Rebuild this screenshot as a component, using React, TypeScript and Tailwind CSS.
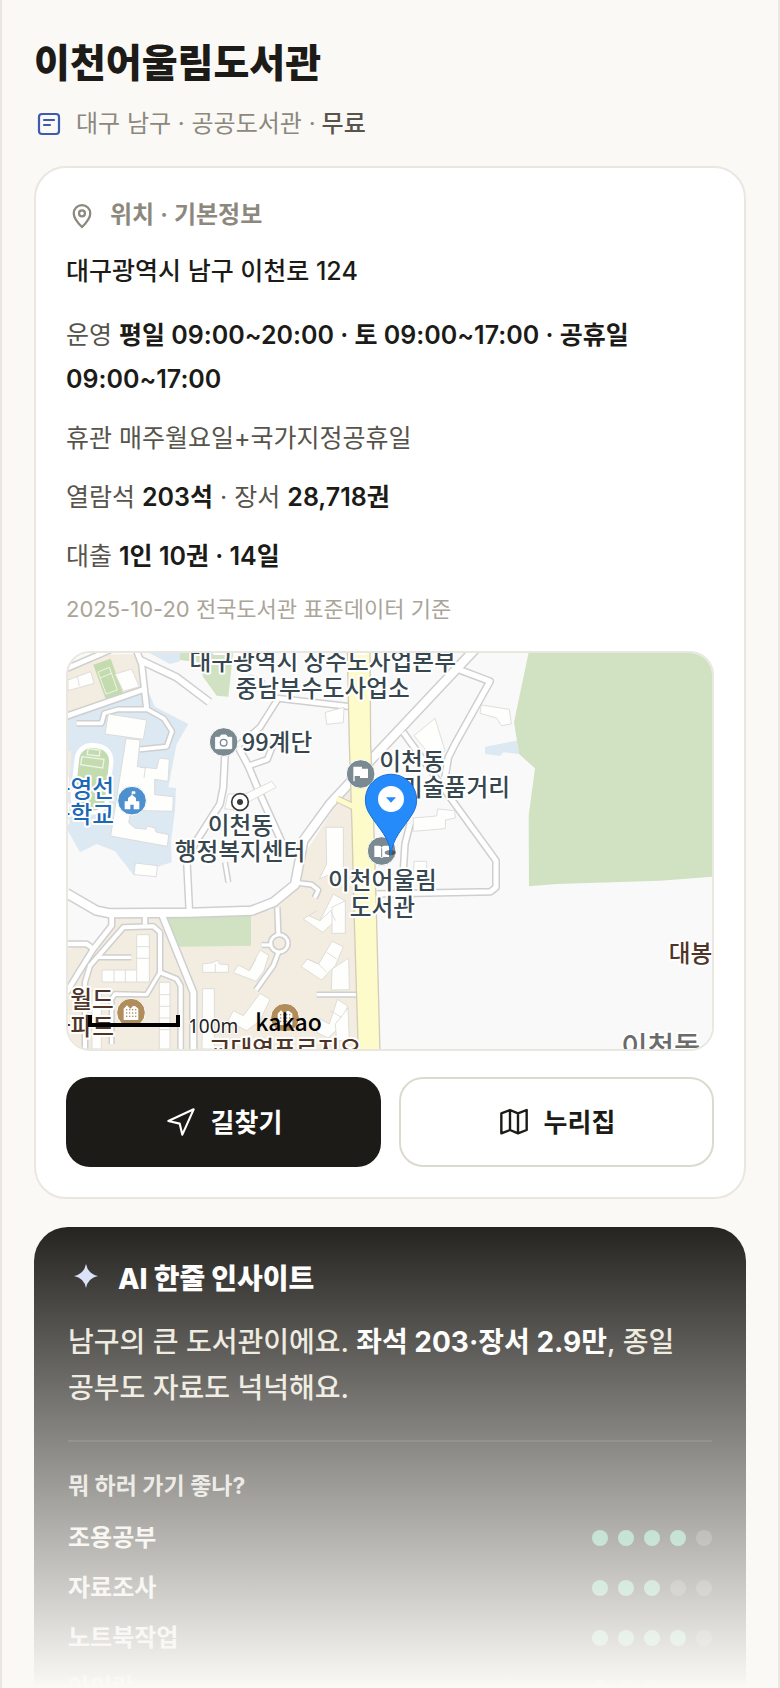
import { Fragment } from "react";

type Pt = string;

const roads: { d: Pt; w: number }[] = [
  { d: "M10 78L150 18", w: 14 },
  { d: "M10 220L255 135", w: 15 },
  { d: "M228 15L245 60L260 195", w: 15 },
  { d: "M240 48L350 100L448 174", w: 18 },
  { d: "M50 238H125L133 208L175 196H262L312 224L336 262L320 308L240 316", w: 11 },
  { d: "M495 330L490 430L480 480L410 590L380 640L388 800", w: 16 },
  { d: "M535 310L565 366L600 450L668 600", w: 16 },
  { d: "M565 366L622 346L640 300", w: 14 },
  { d: "M540 300L600 250L655 163L865 187", w: 14 },
  { d: "M1260 0L1020 255L940 340L810 480L730 590L705 722L640 775L575 800L390 806L150 808L110 800L20 748", w: 24 },
  { d: "M1200 78L1290 112L1185 300L1165 340L1155 400", w: 16 },
  { d: "M1030 265L1170 460L1290 625L1308 650V730L1292 743L950 750", w: 15 },
  { d: "M1050 540L1035 600L1030 680", w: 15 },
  { d: "M155 815V845L100 915L50 995L20 1045", w: 14 },
  { d: "M20 900H80L100 915", w: 13 },
  { d: "M255 810V842", w: 13 },
  { d: "M110 940H214", w: 10 },
  { d: "M75 1225V1015L90 965L190 850L280 847L300 865V985L350 1005L362 1025V1225", w: 12 },
  { d: "M300 985L260 1052L165 1050L155 1065V1200", w: 10 },
  { d: "M305 810L400 1045V1225", w: 17 },
  { d: "M652 790L655 870", w: 12 },
  { d: "M605 903L632 903", w: 10 },
  { d: "M655 925L640 965L588 1038", w: 11 },
  { d: "M770 1052H892", w: 10 },
  { d: "M705 716L755 722L775 738L764 762", w: 11 },
  { d: "M495 655L505 715", w: 10 },
];

const buildings: Pt[] = [
  "M24 108L92 83L102 118L24 140Z",
  "M165 90L215 75L238 128L190 142Z",
  "M145 210L260 228L250 286L135 270Z",
  "M198 284L240 288L232 368L290 374L298 342L328 346L324 412L284 406L284 452L340 458L338 502L262 500L212 498L206 536L224 552L258 556L262 546L284 552L288 564L326 572L322 607L152 576Z",
  "M635 412L648 430L520 498L494 494L504 450L560 448Z",
  "M548 110L572 92L615 110L600 134Z",
  "M796 205L852 190L850 236L800 241Z",
  "M1062 275L1125 223L1155 320L1120 345Z",
  "M1264 183L1348 196L1354 240L1324 245L1310 222L1260 208Z",
  "M1060 522L1130 516L1133 495L1184 500L1186 522L1156 528L1156 554L1060 562Z",
  "M226 657L292 665L289 698L222 692Z",
  "M230 872H268V1014H126V978H230Z",
  "M298 1015H330V1215H298Z",
  "M428 960L458 956L474 948L478 960L505 962V985H428Z",
  "M428 1034H463V1215H426Z",
  "M535 963L568 980L600 918L626 934L612 980L588 1012L520 986Z",
  "M520 1100L550 1115L600 1048L630 1066L600 1130L560 1160L504 1130Z",
  "M746 815L780 830L820 750L854 770L826 830L788 865L730 825Z",
  "M816 790L856 770V868H816Z",
  "M742 945L776 960L816 892L850 908L826 965L784 1008L724 968Z",
  "M816 975L866 942L868 1037L814 1038Z",
  "M780 1125L808 1140L832 1066L863 1086L838 1150L804 1182L770 1165Z",
  "M826 1140L864 1092L868 1190H830Z",
  "M798 550H850V690H812L778 705L800 660Z",
  "M1062 652H1100V710H1060Z",
  "M96 1040H124V1215H96Z",
];

function MapLabel({ x, y, size = 71, anchor = "middle", fill = "#37474f", children }: {
  x: number; y: number; size?: number; anchor?: "start" | "middle" | "end"; fill?: string; children: string;
}) {
  return (
    <text x={x} y={y} fontSize={size} textAnchor={anchor} fill={fill} stroke="#fff" strokeWidth={12} strokeLinejoin="round" paintOrder="stroke" fontWeight={500}>
      {children}
    </text>
  );
}

function Apartment({ x, y }: { x: number; y: number }) {
  return (
    <g transform={`translate(${x} ${y})`}>
      <circle r={43} fill="#b08d5b" stroke="#fff" strokeWidth={3} />
      <path d="M-22 22V-12L-12 -22L-2 -12L6 -20H12L22 -12V22Z" fill="#fff" />
      {[-9, 1, 11].map((cy) =>
        [-13, -4, 5, 14].map((cx) => <rect key={`${cx}${cy}`} x={cx - 2} y={cy - 2} width={4} height={4} fill="#b08d5b" />),
      )}
    </g>
  );
}

function LocationMap() {
  return (
    <svg viewBox="24 27 1932 1188" preserveAspectRatio="xMidYMid slice" className="block h-[396px] w-full" role="img" aria-label="이천어울림도서관 지도">
      <rect x={0} y={0} width={2000} height={1300} fill="#f9f9f9" />
      <path d="M24 210L260 130L285 188L385 240L350 300L325 430L348 432L345 500L333 590L335 655L220 692L165 622L110 600L60 625L24 560ZM255 20H360V52L330 60Z" fill="#dce9f2" />
      <path d="M24 75L130 32L235 30L248 132L24 212ZM24 320L34 322L30 390L24 400Z" fill="#f3ece0" />
      <path d="M155 805L630 800L700 740L740 620L830 480L872 430L880 600L895 1220H20V915L100 905L155 835Z" fill="#f3ece0" />
      <path d="M360 20H520L505 158L470 155L430 100L415 55L360 48Z" fill="#d0e2c1" />
      <path d="M318 815L573 813V905L358 908Z" fill="#d0e2c1" />
      <path d="M1275 308L1370 290L1377 330L1330 325L1320 336L1275 330Z" fill="#dce9f2" />
      <path d="M1407 20L1362 235L1377 330L1425 373L1406 515L1407 727L1490 720L1800 710L1970 697V20Z" fill="#d0e2c1" />
      <path d="M100 62L152 44L190 150L138 168Z" fill="#c3dbae" />
      <path d="M114 84L148 70L172 138L138 150ZM120 102L154 88" fill="none" stroke="#eef5e8" strokeWidth={3} />
      <rect x={38} y={297} width={117} height={215} rx={52} fill="#fff" transform="rotate(6 96 400)" />
      <rect x={52} y={312} width={90} height={188} rx={38} fill="#c3dbae" transform="rotate(6 96 400)" />
      <path d="M84 314L120 318L118 336L82 332ZM66 338L132 346L128 372L62 362Z" fill="none" stroke="#eef5e8" strokeWidth={4} />

      <g fill="none" stroke="#cfcfcf" strokeLinejoin="round">
        {roads.map((r) => <path key={r.d} d={r.d} strokeWidth={r.w + 9} />)}
        <circle cx={658} cy={898} r={26} strokeWidth={18} />
      </g>
      <g fill="none" stroke="#fff" strokeLinejoin="round">
        {roads.map((r) => <path key={r.d} d={r.d} strokeWidth={r.w} />)}
        <circle cx={658} cy={898} r={26} strokeWidth={9} />
      </g>
      <g fill="#fefefd" stroke="#d9d8d5" strokeWidth={2.5}>
        {buildings.map((d) => <path key={d} d={d} />)}
        <path d="M52 96L58 126M240 370L256 372L252 402M230 908H268M230 943H268M230 978V1014M196 978V1014M162 978V1014M298 1052H330M298 1087H330M298 1122H330M298 1157H330M466 960V984M568 980L588 945M746 815L770 800M780 830L812 800L826 830M742 945L776 960L800 985M800 925L830 945M810 1100L845 1120" fill="none" />
      </g>
      <path d="M832 465L880 488" stroke="#d6d0bc" strokeWidth={22} />
      <path d="M862 20L868 300L876 550L882 800L895 1225H960L949 800L940 500L932 300L930 20Z" fill="#fefbca" stroke="#d3cdb9" strokeWidth={4} />
      <path d="M830 464L884 490" stroke="#fefbca" strokeWidth={15} />

      <g style={{ fontFamily: '"Noto Sans CJK KR", sans-serif' }}>
        <MapLabel x={788} y={78}>대구광역시 상수도사업본부</MapLabel>
        <MapLabel x={788} y={158}>중남부수도사업소</MapLabel>
        <MapLabel x={545} y={320} anchor="start">99계단</MapLabel>
        <MapLabel x={541} y={570}>이천동</MapLabel>
        <MapLabel x={540} y={649}>행정복지센터</MapLabel>
        <MapLabel x={162} y={460} anchor="end" fill="#1c68b5">대구영선</MapLabel>
        <MapLabel x={162} y={537} anchor="end" fill="#1c68b5">초등학교</MapLabel>
        <MapLabel x={958} y={377} anchor="start">이천동</MapLabel>
        <MapLabel x={958} y={457} anchor="start">고미술품거리</MapLabel>
        <MapLabel x={1826} y={953} anchor="start" fill="#4f3528">대봉</MapLabel>
        <MapLabel x={1684} y={1238} size={86} anchor="start" fill="#6b6b6b">이천동</MapLabel>
        <Apartment x={213} y={1106} />
        <MapLabel x={96} y={1093} fill="#4f3528">월드</MapLabel>
        <MapLabel x={162} y={1172} anchor="end" fill="#4f3528">아파트</MapLabel>
        <Apartment x={675} y={1121} />
        <MapLabel x={675} y={1241} fill="#4f3528">교대역푸르지오</MapLabel>
      </g>

      <g transform="translate(491 294)">
        <circle r={43} fill="#7b8a91" stroke="#fff" strokeWidth={3} />
        <path d="M-24 -14H-12L-7 -21H7L12 -14H24V20H-24Z" fill="#fff" stroke="#fff" strokeWidth={3} strokeLinejoin="round" />
        <circle cy={2} r={10} fill="#fff" stroke="#7b8a91" strokeWidth={4} />
      </g>
      <g transform="translate(902 390)">
        <circle r={43} fill="#7b8a91" stroke="#fff" strokeWidth={3} />
        <path d="M-20 -22V22M-20 -20H2V-14H20V10H0V4H-20Z" fill="#fff" stroke="#fff" strokeWidth={4} />
      </g>
      <g transform="translate(965 621)">
        <circle r={43} fill="#7b8a91" stroke="#fff" strokeWidth={3} />
        <path d="M-22 -16H-8Q0 -16 0 -8Q0 -16 8 -16H22V18H6L0 21L-6 18H-22Z" fill="#fff" />
        <path d="M0 -8V18" stroke="#7b8a91" strokeWidth={3} />
      </g>
      <g transform="translate(216 470)">
        <circle r={43} fill="#4e90cd" stroke="#fff" strokeWidth={3} />
        <path d="M-22 26V2H-12V-8L0 -18L12 -8V2H22V26H5V12H-5V26Z" fill="#fff" />
        <path d="M0 -16V-27H9V-21H0" fill="#fff" stroke="#fff" strokeWidth={2} />
      </g>
      <circle cx={540} cy={474} r={25} fill="#fff" stroke="#37393b" strokeWidth={5} />
      <circle cx={540} cy={474} r={9} fill="#37393b" />

      <g style={{ fontFamily: '"Noto Sans CJK KR", sans-serif' }}>
        <MapLabel x={967} y={736}>이천어울림</MapLabel>
        <MapLabel x={967} y={816}>도서관</MapLabel>
      </g>
      <ellipse cx={991} cy={626} rx={17} ry={8} fill="#1f2937" opacity={0.55} />
      <path d="M993 632C988 580 958 556 930 512A77 77 0 1 1 1056 512C1028 556 998 580 993 632Z" fill="#258bfb" stroke="#1c6fd4" strokeWidth={3} />
      <circle cx={993} cy={465} r={39} fill="#fff" />
      <path d="M978 460H1008L993 476Z" fill="#258bfb" />

      <path d="M84 1113H96V1137H348V1113H360V1149H84Z" fill="#000" />
      <text x={384} y={1166} fontSize={57} fill="#222" stroke="#fff" strokeWidth={6} paintOrder="stroke" style={{ fontFamily: '"Noto Sans", sans-serif' }}>100m</text>
      <text x={586} y={1160} fontSize={69} fill="#000" fontWeight={500} style={{ fontFamily: '"Noto Sans CJK KR", sans-serif' }}>kakao</text>
    </svg>
  );
}

const uses = [
  { name: "조용공부", score: 4 },
  { name: "자료조사", score: 3 },
  { name: "노트북작업", score: 4 },
  { name: "아이랑", score: 3 },
];

export default function App() {
  return (
    <div className="relative h-screen overflow-hidden border-x-2 border-[#e9e7e0] bg-[#faf9f6] px-8 font-['Inter','Noto_Sans_CJK_KR',sans-serif] break-keep text-[#1c1b17]">
      <header className="pt-9">
        <h1 className="text-[39px] leading-[54px] font-extrabold">이천어울림도서관</h1>
        <p className="mt-4 flex items-center text-[24px] leading-9 text-[#8c887d]">
          <svg viewBox="0 0 30 30" className="mr-3 size-[30px]" fill="none" stroke="#3f5bb0" strokeWidth={2.2} strokeLinecap="round" aria-hidden="true">
            <rect x={5} y={5} width={20} height={20} rx={3} />
            <path d="M10 11H20M10 16H16" />
          </svg>
          <span>대구 남구 · 공공도서관 ·</span>
          <strong className="ml-1.5 font-medium text-[#57544b]">무료</strong>
        </p>
      </header>

      <section className="mt-6 rounded-[32px] border-2 border-[#e9e7e0] bg-white p-[30px]">
        <h2 className="flex items-center text-[24px] leading-[34px] font-semibold text-[#8c887d]">
          <svg viewBox="0 0 24 24" className="mr-3 size-8" fill="none" stroke="currentColor" strokeWidth={1.7} aria-hidden="true">
            <path d="M12 21c-3.500-3.500-6.200-6.800-6.200-10.200a6.200 6.200 0 0 1 12.400 0c0 3.400-2.700 6.700-6.200 10.200z" />
            <circle cx={12} cy={10.8} r={2.2} />
          </svg>
          위치 · 기본정보
        </h2>
        <p className="mt-[17px] text-[25px] leading-[44px] font-medium">대구광역시 남구 이천로 124</p>
        <div className="mt-5 flex flex-col gap-[15px] text-[25px] leading-[44px] text-[#57544b] [&_b]:font-semibold [&_b]:text-[#1c1b17]">
          <p>운영 <b>평일 09:00~20:00 · 토 09:00~17:00 · 공휴일 09:00~17:00</b></p>
          <p>휴관 매주월요일+국가지정공휴일</p>
          <p>열람석 <b>203석</b> · 장서 <b>28,718권</b></p>
          <p>대출 <b>1인 10권 · 14일</b></p>
        </div>
        <p className="mt-[13px] text-[22px] leading-9 text-[#aaa598]">2025-10-20 전국도서관 표준데이터 기준</p>
        <div className="mt-6 overflow-hidden rounded-3xl border-2 border-[#e9e7e0]">
          <LocationMap />
        </div>
        <div className="mt-[26px] grid grid-cols-2 gap-[18px] text-[26px] font-bold">
          <button type="button" className="flex h-[90px] items-center justify-center gap-3.5 rounded-3xl bg-[#1c1b17] text-white">
            <svg viewBox="0 0 24 24" className="size-8" fill="none" stroke="currentColor" strokeWidth={1.6} strokeLinejoin="round" aria-hidden="true">
              <path d="M2.500 11.200L21.500 2.500L13 21.500L11 13.200Z" />
            </svg>
            길찾기
          </button>
          <button type="button" className="flex h-[90px] items-center justify-center gap-3.5 rounded-3xl border-2 border-[#dcd9cf] bg-white">
            <svg viewBox="0 0 24 24" className="size-8" fill="none" stroke="currentColor" strokeWidth={1.8} strokeLinejoin="round" aria-hidden="true">
              <path d="M9 3L2.500 5.500V20.500L9 18L15 20.500L21.500 18V3L15 5.500ZM9 3V18M15 5.500V20.500" />
            </svg>
            누리집
          </button>
        </div>
      </section>

      <section className="mt-7 h-[620px] rounded-[34px] bg-[#1c1b17] p-[34px]">
        <h2 className="flex items-center text-[28px] leading-9 font-extrabold text-white">
          <svg viewBox="0 0 36 36" className="mr-3.5 size-9" fill="#d5def8" aria-hidden="true">
            <path d="M18 3Q20 13 30 15Q20 17 18 27Q16 17 6 15Q16 13 18 3Z" />
          </svg>
          AI 한줄 인사이트
        </h2>
        <p className="mt-[22px] text-[28px] leading-[46px] font-medium text-[#eae6da]">
          남구의 큰 도서관이에요. <b className="font-bold text-white">좌석 203·장서 2.9만</b>, 종일 공부도 자료도 넉넉해요.
        </p>
        <div className="mt-[29px] border-t-2 border-white/10 pt-7">
          <h3 className="text-[23px] leading-8 font-bold text-[#dcd9cf]">뭐 하러 가기 좋나?</h3>
          <dl className="mt-4 grid grid-cols-[1fr_auto] items-center gap-y-2.5 text-[24px] leading-10 font-semibold text-[#f3f1ea]">
            {uses.map((u) => (
              <Fragment key={u.name}>
                <dt>{u.name}</dt>
                <dd className="flex gap-2.5" aria-label={`5점 중 ${u.score}점`}>
                  {[1, 2, 3, 4, 5].map((n) => (
                    <i key={n} className={n <= u.score ? "size-4 rounded-full bg-[#59b48e]" : "size-4 rounded-full bg-white/20"} />
                  ))}
                </dd>
              </Fragment>
            ))}
          </dl>
        </div>
      </section>

      <div className="pointer-events-none absolute -inset-x-0.5 bottom-0 h-[480px] bg-linear-to-b from-[#faf9f6]/0 to-[#faf9f6]" />
    </div>
  );
}
